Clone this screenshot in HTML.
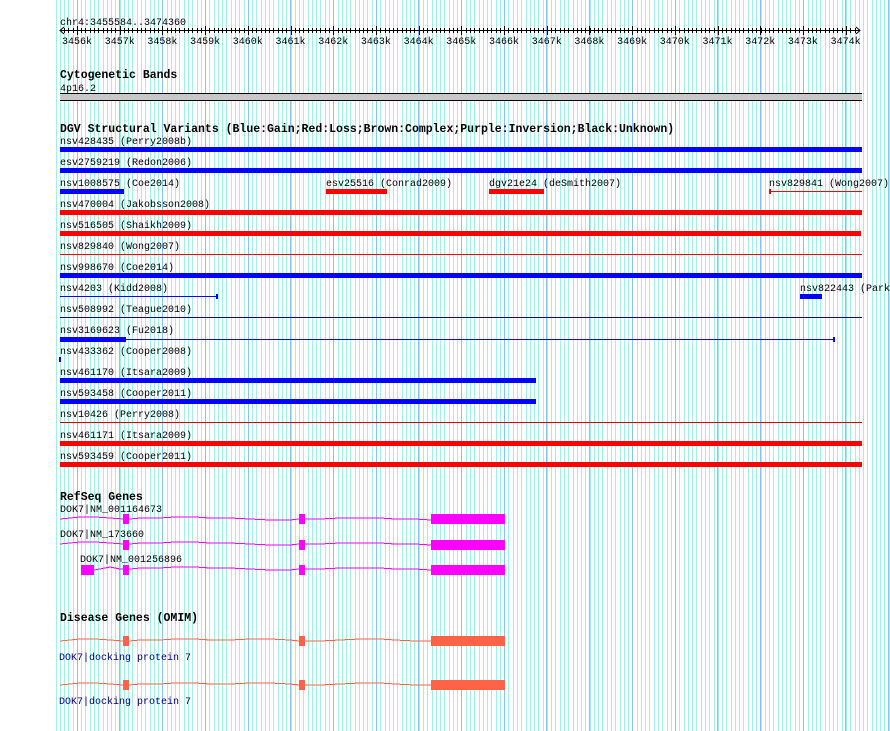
<!DOCTYPE html>
<html><head><meta charset="utf-8"><style>
html,body{margin:0;padding:0;background:#fff;width:890px;height:731px;overflow:hidden}
svg{display:block}
text{font-family:"Liberation Mono","DejaVu Sans Mono",monospace;font-size:10px;fill:#000}
.b{font-weight:bold;font-size:11.5px}
.n{fill:#000080}
</style></head><body>
<svg width="890" height="731" viewBox="0 0 890 731" xmlns="http://www.w3.org/2000/svg" shape-rendering="crispEdges">
<defs>
<pattern id="lg" x="0" y="0" width="47" height="10" patternUnits="userSpaceOnUse">
<g fill="#a4eeea"><rect x="0" width="1" height="10"/><rect x="4" width="1" height="10"/><rect x="9" width="1" height="10"/><rect x="13" width="1" height="10"/><rect x="17" width="1" height="10"/><rect x="21" width="1" height="10"/><rect x="26" width="1" height="10"/><rect x="30" width="1" height="10"/><rect x="34" width="1" height="10"/><rect x="38" width="1" height="10"/><rect x="43" width="1" height="10"/></g>
</pattern>
<pattern id="dg" x="34" y="0" width="427" height="10" patternUnits="userSpaceOnUse">
<g fill="#88c4ee"><rect x="0" width="1" height="10"/><rect x="43" width="1" height="10"/><rect x="85" width="1" height="10"/><rect x="128" width="1" height="10"/><rect x="171" width="1" height="10"/><rect x="214" width="1" height="10"/><rect x="256" width="1" height="10"/><rect x="299" width="1" height="10"/><rect x="342" width="1" height="10"/><rect x="384" width="1" height="10"/></g>
</pattern>
<pattern id="tk" x="0" y="0" width="47" height="10" patternUnits="userSpaceOnUse">
<g fill="#000"><rect x="0" width="1" height="10"/><rect x="4" width="1" height="10"/><rect x="9" width="1" height="10"/><rect x="13" width="1" height="10"/><rect x="17" width="1" height="10"/><rect x="21" width="1" height="10"/><rect x="26" width="1" height="10"/><rect x="30" width="1" height="10"/><rect x="34" width="1" height="10"/><rect x="38" width="1" height="10"/><rect x="43" width="1" height="10"/></g>
</pattern>
</defs>
<rect width="890" height="731" fill="#fff"/>
<rect x="54" y="0" width="836" height="731" fill="url(#lg)"/>
<rect x="54" y="0" width="836" height="731" fill="url(#dg)"/>

<!-- ruler -->
<text x="60" y="25">chr4:3455584..3474360</text>
<rect x="60" y="30" width="800" height="1" fill="#000"/>
<rect x="62" y="28" width="796" height="5" fill="url(#tk)"/>
<path d="M64 27 L60 30.5 L64 34 M856 27 L860 30.5 L856 34" stroke="#000" fill="none" shape-rendering="auto"/>
<g fill="#000">
<rect x="77" y="26" width="1" height="9"/><rect x="120" y="26" width="1" height="9"/><rect x="162" y="26" width="1" height="9"/><rect x="205" y="26" width="1" height="9"/><rect x="248" y="26" width="1" height="9"/><rect x="291" y="26" width="1" height="9"/><rect x="333" y="26" width="1" height="9"/><rect x="376" y="26" width="1" height="9"/><rect x="419" y="26" width="1" height="9"/><rect x="461" y="26" width="1" height="9"/><rect x="504" y="26" width="1" height="9"/><rect x="547" y="26" width="1" height="9"/><rect x="589" y="26" width="1" height="9"/><rect x="632" y="26" width="1" height="9"/><rect x="675" y="26" width="1" height="9"/><rect x="718" y="26" width="1" height="9"/><rect x="760" y="26" width="1" height="9"/><rect x="803" y="26" width="1" height="9"/><rect x="846" y="26" width="1" height="9"/>
</g>
<g text-anchor="middle">
<text x="77" y="44">3456k</text><text x="119.7" y="44">3457k</text><text x="162.4" y="44">3458k</text><text x="205.1" y="44">3459k</text><text x="247.8" y="44">3460k</text><text x="290.5" y="44">3461k</text><text x="333.2" y="44">3462k</text><text x="375.9" y="44">3463k</text><text x="418.6" y="44">3464k</text><text x="461.3" y="44">3465k</text><text x="504" y="44">3466k</text><text x="546.7" y="44">3467k</text><text x="589.4" y="44">3468k</text><text x="632.1" y="44">3469k</text><text x="674.8" y="44">3470k</text><text x="717.5" y="44">3471k</text><text x="760.2" y="44">3472k</text><text x="802.9" y="44">3473k</text><text x="845.6" y="44">3474k</text>
</g>

<!-- cytoband -->
<text class="b" x="60" y="78">Cytogenetic Bands</text>
<text x="60" y="91">4p16.2</text>
<rect x="60" y="93" width="802" height="8" fill="#c8c8c8"/>
<rect x="60" y="93" width="802" height="1" fill="#000"/>
<rect x="60" y="100" width="802" height="1" fill="#000"/>

<!-- DGV -->
<text class="b" x="60" y="132">DGV Structural Variants (Blue:Gain;Red:Loss;Brown:Complex;Purple:Inversion;Black:Unknown)</text>
<text x="60" y="144">nsv428435 (Perry2008b)</text>
<rect x="60" y="147" width="802" height="5" fill="#0000ff"/>
<text x="60" y="165">esv2759219 (Redon2006)</text>
<rect x="60" y="168" width="802" height="5" fill="#0000ff"/>
<text x="60" y="186">nsv1008575 (Coe2014)</text>
<rect x="60" y="189" width="64" height="5" fill="#0000ff"/>
<text x="326" y="186">esv25516 (Conrad2009)</text>
<rect x="326" y="189" width="61" height="5" fill="#ff0000"/>
<text x="489" y="186">dgv21e24 (deSmith2007)</text>
<rect x="489" y="189" width="55" height="5" fill="#ff0000"/>
<text x="769" y="186">nsv829841 (Wong2007)</text>
<rect x="770" y="191" width="92" height="1" fill="#ff0000"/>
<rect x="769" y="189" width="2" height="5" fill="#ff0000"/>
<text x="60" y="207">nsv470004 (Jakobsson2008)</text>
<rect x="60" y="210" width="802" height="5" fill="#ff0000"/>
<text x="60" y="228">nsv516505 (Shaikh2009)</text>
<rect x="60" y="231" width="801" height="5" fill="#ff0000"/>
<text x="60" y="249">nsv829840 (Wong2007)</text>
<rect x="60" y="254" width="802" height="1" fill="#ff0000"/>
<text x="60" y="270">nsv998670 (Coe2014)</text>
<rect x="60" y="273" width="802" height="5" fill="#0000ff"/>
<text x="60" y="291">nsv4203 (Kidd2008)</text>
<rect x="60" y="296" width="157" height="1" fill="#0000ff"/>
<rect x="216" y="294" width="2" height="5" fill="#0000ff"/>
<text x="800" y="291">nsv822443 (Park</text>
<rect x="800" y="294" width="22" height="5" fill="#0000ff"/>
<text x="60" y="312">nsv508992 (Teague2010)</text>
<rect x="60" y="317" width="802" height="1" fill="#0000aa"/>
<text x="60" y="333">nsv3169623 (Fu2018)</text>
<rect x="60" y="337" width="66" height="5" fill="#0000ff"/>
<rect x="126" y="339" width="708" height="1" fill="#0000ff"/>
<rect x="833" y="337" width="2" height="5" fill="#0000ff"/>
<text x="60" y="354">nsv433362 (Cooper2008)</text>
<rect x="59" y="357" width="2" height="5" fill="#0000ff"/>
<text x="60" y="375">nsv461170 (Itsara2009)</text>
<rect x="60" y="378" width="476" height="5" fill="#0000ff"/>
<text x="60" y="396">nsv593458 (Cooper2011)</text>
<rect x="60" y="399" width="476" height="5" fill="#0000ff"/>
<text x="60" y="417">nsv10426 (Perry2008)</text>
<rect x="60" y="422" width="802" height="1" fill="#cc0000"/>
<text x="60" y="438">nsv461171 (Itsara2009)</text>
<rect x="60" y="441" width="802" height="5" fill="#ff0000"/>
<text x="60" y="459">nsv593459 (Cooper2011)</text>
<rect x="60" y="462" width="802" height="5" fill="#ff0000"/>

<!-- RefSeq -->
<text class="b" x="60" y="500">RefSeq Genes</text>
<g fill="none" stroke="#ff00ff" stroke-width="1">
<polyline points="60,519 70,518 80,517 95,517 110,518 124,519 130,519 140,518 160,518 175,517 195,517 210,518 230,518 250,519 270,520 290,520 299,519 305,519 320,519 340,518 360,518 380,518 395,519 415,519 431,520"/>
<polyline points="60,544 70,543 80,542 95,542 110,543 124,544 130,544 140,543 160,543 175,542 195,542 210,543 230,543 250,544 270,545 290,545 299,544 305,544 320,544 340,543 360,543 380,543 395,544 415,544 431,545"/>
<polyline points="94,570 105,568 110,567 120,569 124,569 130,569 140,568 160,568 175,567 195,567 210,568 230,568 250,569 270,570 290,570 299,569 305,569 320,569 340,568 360,568 380,568 395,569 415,569 431,570"/>
</g>
<g fill="#ff00ff">
<rect x="123" y="514" width="6" height="10"/><rect x="299" y="514" width="6" height="10"/><rect x="431" y="514" width="74" height="10"/>
<rect x="123" y="540" width="6" height="10"/><rect x="299" y="540" width="6" height="10"/><rect x="431" y="540" width="74" height="10"/>
<rect x="81" y="565" width="13" height="10"/><rect x="123" y="565" width="6" height="10"/><rect x="299" y="565" width="6" height="10"/><rect x="431" y="565" width="74" height="10"/>
</g>
<text x="60" y="512">DOK7|NM_001164673</text>
<text x="60" y="537">DOK7|NM_173660</text>
<text x="80" y="562">DOK7|NM_001256896</text>

<!-- OMIM -->
<text class="b" x="60" y="621">Disease Genes (OMIM)</text>
<g fill="none" stroke="#ff6347" stroke-width="1">
<polyline points="60,641 70,640 80,639 95,639 110,640 123,641 129,641 140,640 160,640 175,639 195,639 210,640 230,640 250,639 270,639 290,640 299,641 305,641 320,641 340,640 360,639 380,639 395,640 415,641 431,641"/>
<polyline points="60,685 70,684 80,683 95,683 110,684 123,685 129,685 140,684 160,684 175,683 195,683 210,684 230,684 250,683 270,683 290,684 299,685 305,685 320,685 340,684 360,683 380,683 395,684 415,685 431,685"/>
</g>
<g fill="#ff6347">
<rect x="123" y="636" width="6" height="10"/><rect x="299" y="636" width="6" height="10"/><rect x="431" y="636" width="74" height="10"/>
<rect x="123" y="680" width="6" height="10"/><rect x="299" y="680" width="6" height="10"/><rect x="431" y="680" width="74" height="10"/>
</g>
<text class="n" x="59" y="660">DOK7|docking protein 7</text>
<text class="n" x="59" y="704">DOK7|docking protein 7</text>
</svg>
</body></html>
